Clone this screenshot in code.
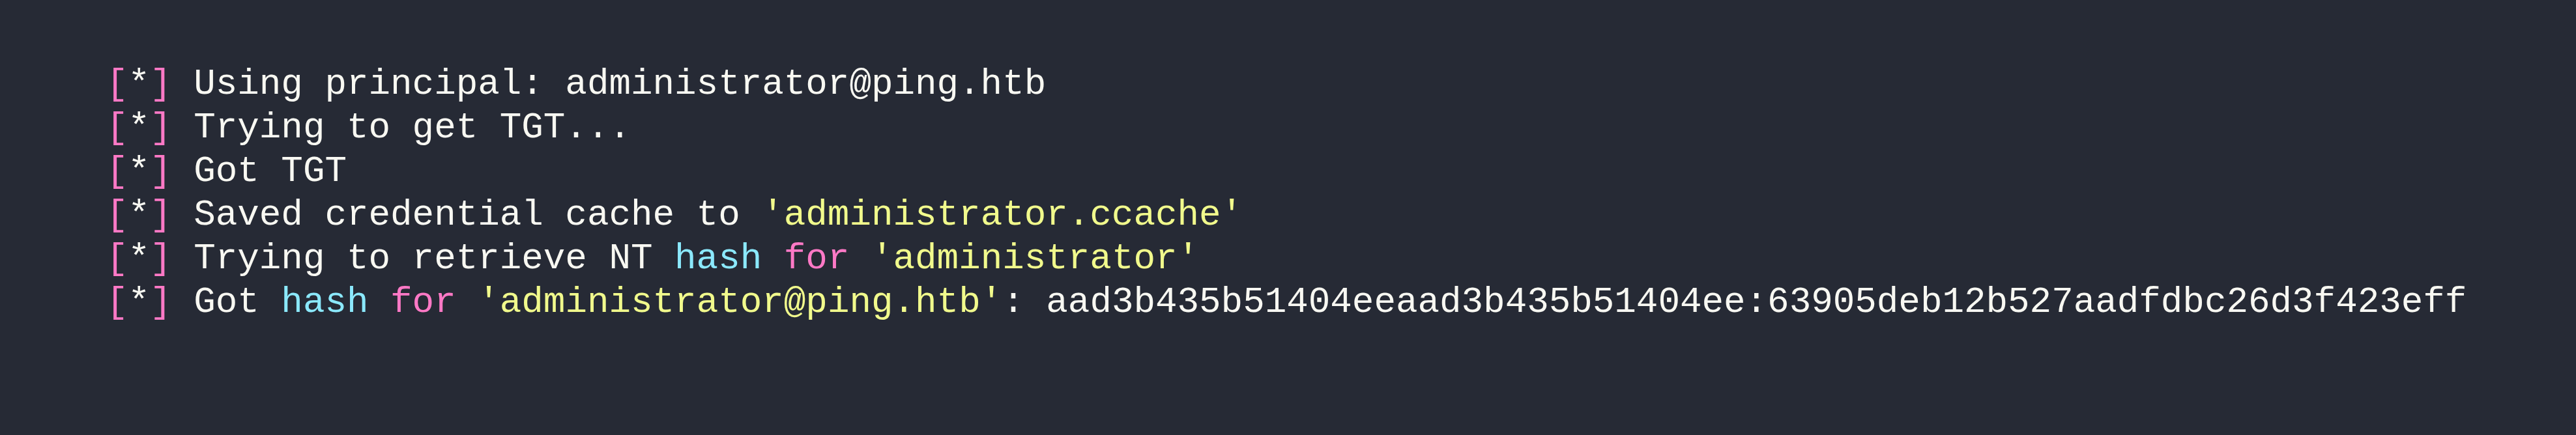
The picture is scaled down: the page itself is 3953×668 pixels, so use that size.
const PINK = "text-[#ff79c6]";
const CYAN = "text-[#8be9fd]";
const YELLOW = "text-[#f1fa8c]";

type Seg = { t: string; c?: string };

const lines: Seg[][] = [
  [{ t: "Using principal: administrator@ping.htb" }],
  [{ t: "Trying to get TGT..." }],
  [{ t: "Got TGT" }],
  [{ t: "Saved credential cache to " }, { t: "'administrator.ccache'", c: YELLOW }],
  [
    { t: "Trying to retrieve NT " },
    { t: "hash", c: CYAN },
    { t: " " },
    { t: "for", c: PINK },
    { t: " " },
    { t: "'administrator'", c: YELLOW },
  ],
  [
    { t: "Got " },
    { t: "hash", c: CYAN },
    { t: " " },
    { t: "for", c: PINK },
    { t: " " },
    { t: "'administrator@ping.htb'", c: YELLOW },
    { t: ": aad3b435b51404eeaad3b435b51404ee:63905deb12b527aadfdbc26d3f423eff" },
  ],
];

export default function App() {
  return (
    <div className="h-[668px] w-full bg-[#262a35] pl-[163px] pt-[96px]">
      <div className="font-['Liberation_Mono',monospace] text-[55.9px] leading-[67px] text-[#f8f8f2] whitespace-pre">
        {lines.map((segs, i) => (
          <div key={i}>
            <span className={PINK}>[</span>*<span className={PINK}>]</span>{" "}
            {segs.map((s, j) => (
              <span key={j} className={s.c}>
                {s.t}
              </span>
            ))}
          </div>
        ))}
      </div>
    </div>
  );
}
